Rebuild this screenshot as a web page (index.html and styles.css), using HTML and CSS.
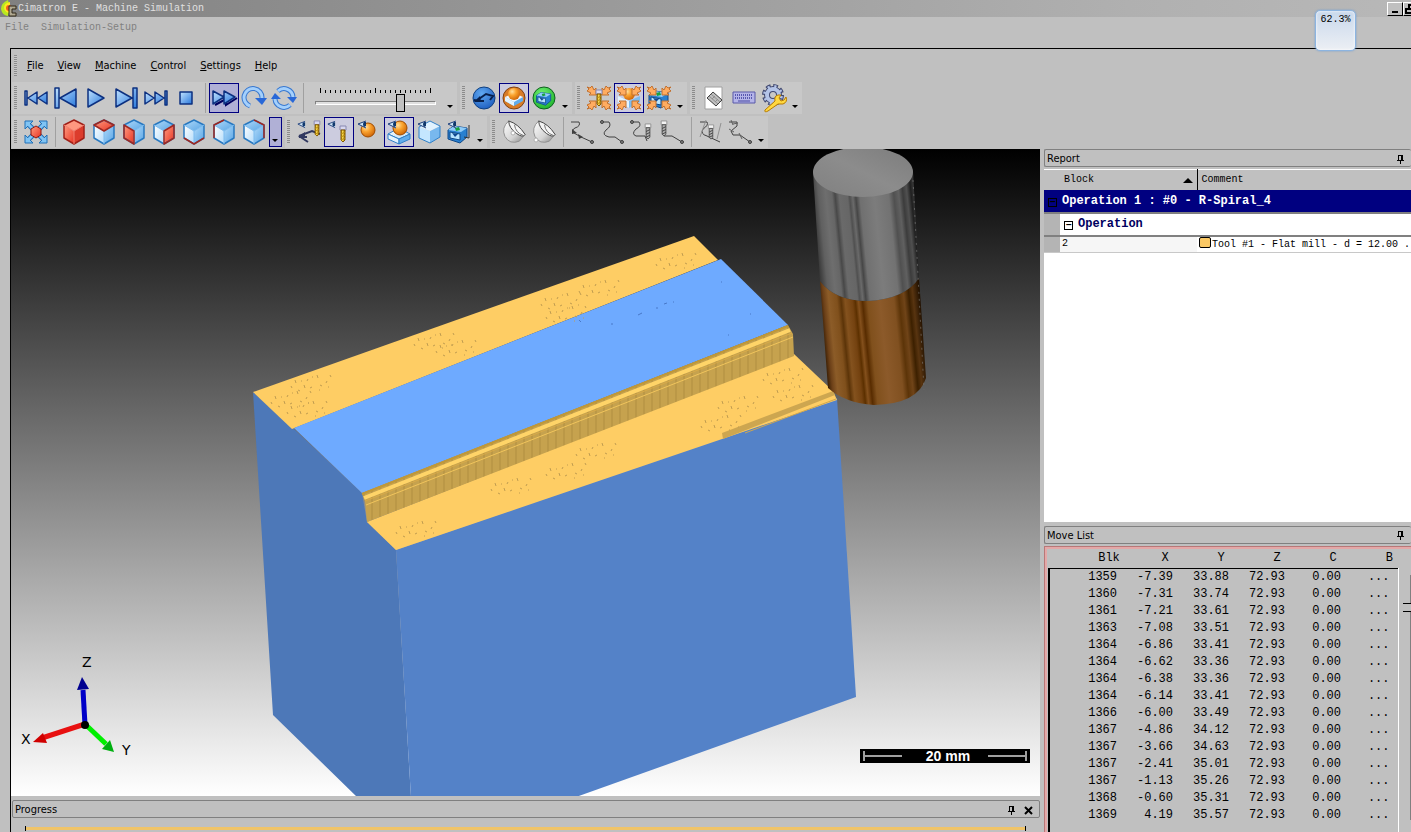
FILE: index.html
```html
<!DOCTYPE html>
<html lang="en">

<head>
    <meta charset="UTF-8">
    <meta name="viewport" content="width=device-width, initial-scale=1.0">
    <title>Cimatron E - Machine Simulation</title>
    <link rel="stylesheet" href="styles.css">
</head>

<body>
    <!-- Shared gradients and icon parts -->
    <svg class="defs" aria-hidden="true">
        <defs>
            <linearGradient id="blue" x1="0" y1="0" x2="1" y2="1">
                <stop offset="0" stop-color="#c4e4ff" />
                <stop offset="1" stop-color="#2878dc" />
            </linearGradient>
            <linearGradient id="ice" x1="0" y1="0" x2="1" y2="1">
                <stop offset="0" stop-color="#ffffff" />
                <stop offset="1" stop-color="#b4dcfa" />
            </linearGradient>
            <linearGradient id="sky" x1="0" y1="0" x2="1" y2="1">
                <stop offset="0" stop-color="#b0dafa" />
                <stop offset="1" stop-color="#58a4e4" />
            </linearGradient>
            <linearGradient id="red" x1="0" y1="0" x2="1" y2="1">
                <stop offset="0" stop-color="#ff9c80" />
                <stop offset="1" stop-color="#e83424" />
            </linearGradient>
            <radialGradient id="ball" cx=".35" cy=".3" r=".8">
                <stop offset="0" stop-color="#ffe0a0" />
                <stop offset=".4" stop-color="#fba430" />
                <stop offset="1" stop-color="#c85c00" />
            </radialGradient>
            <radialGradient id="disc" cx=".4" cy=".3" r=".8">
                <stop offset="0" stop-color="#60a8f0" />
                <stop offset="1" stop-color="#1858bc" />
            </radialGradient>
            <radialGradient id="green" cx=".4" cy=".3" r=".8">
                <stop offset="0" stop-color="#70f070" />
                <stop offset="1" stop-color="#18b028" />
            </radialGradient>
            <linearGradient id="gold" x1="0" y1="0" x2="1" y2="0">
                <stop offset="0" stop-color="#a07000" />
                <stop offset=".4" stop-color="#ffe050" />
                <stop offset="1" stop-color="#906000" />
            </linearGradient>
            <linearGradient id="silver" x1="0" y1="0" x2="1" y2="1">
                <stop offset="0" stop-color="#ffffff" />
                <stop offset=".6" stop-color="#d4d4d4" />
                <stop offset="1" stop-color="#808080" />
            </linearGradient>

            <symbol id="cube" viewBox="0 0 30 30">
                <path d="M15 3 25 8 15 14 5 8Z" fill="var(--top, url(#sky))" />
                <path d="M5 8 15 14V27L5 21Z" fill="var(--left, url(#ice))" />
                <path d="M25 8 15 14V27L25 21Z" fill="var(--right, url(#sky))" />
                <path d="M15 3 25 8V21L15 27 5 21V8Z" fill="none" stroke="var(--edge, #2878c0)" stroke-width="1.5" stroke-linejoin="round" />
                <path d="M5 8 15 14 25 8M15 14V27" fill="none" stroke="var(--inner, #7cbcf0)" />
            </symbol>
            <symbol id="eye" viewBox="0 0 10 9">
                <path d="M9 1 1 4 9 8" fill="#d0e8f8" stroke="#20407c" />
                <path d="M7 2Q5 4 7 7L9 6V2Z" fill="#10386c" />
            </symbol>
            <symbol id="mill" viewBox="0 0 8 18">
                <path d="M1 1H7V5H1Z" fill="#d8d8f0" stroke="#8888b0" />
                <path d="M2 5H6V15L4 17 2 15Z" fill="url(#gold)" stroke="#805800" />
                <path d="M2 9 6 7M2 12 6 10M2 15 6 13" stroke="#b88c10" />
            </symbol>
            <symbol id="graymill" viewBox="0 0 8 18">
                <path d="M1 1H7V5H1Z" fill="#f4f4f4" stroke="#909090" />
                <path d="M2 5H6V15L4 17 2 15Z" fill="#b0b0b0" stroke="#505050" />
                <path d="M2 9 6 7M2 12 6 10M2 15 6 13" stroke="#404040" />
            </symbol>
            <symbol id="block" viewBox="0 0 24 18">
                <path d="M1 7 12 1 23 7 12 12Z" fill="url(#ice)" stroke="#3080c8" />
                <path d="M1 7 12 12V17L1 12Z" fill="#e4f4ff" stroke="#3080c8" />
                <path d="M23 7 12 12V17L23 12Z" fill="#60acec" stroke="#3080c8" />
            </symbol>
            <symbol id="machine" viewBox="0 0 24 20">
                <path d="M2 6 8 2 21 4V13L14 19 2 15Z" fill="#2880d0" stroke="#104888" />
                <path d="M2 6 8 2 21 4 15 8Z" fill="#90ccf8" />
                <path d="M4 8 14 10V16L4 14Z" fill="#b8e4ff" stroke="#104888" />
                <path d="M6 9 12 10 9 13Z" fill="#104890" />
                <path d="M9 4 13 3 14 6 10 7Z" fill="#18a040" />
            </symbol>
            <symbol id="corners" viewBox="0 0 30 30">
                <g fill="#ffac60" stroke="#c07030">
                    <path d="M3 4 6 5 8 3 10 7 12 5V12H5L7 10 3 8 5 6Z" />
                    <path d="M27 4 24 5 22 3 20 7 18 5V12H25L23 10 27 8 25 6Z" />
                    <path d="M3 26 6 25 8 27 10 23 12 25V18H5L7 20 3 22 5 24Z" />
                    <path d="M27 26 24 25 22 27 20 23 18 25V18H25L23 20 27 22 25 24Z" />
                </g>
            </symbol>
            <symbol id="dish" viewBox="0 0 26 26">
                <path d="M7 1Q-1 8 3 17 8 26 18 22L24 15Z" fill="url(#silver)" stroke="#909090" />
                <path d="M7 1Q17 4 24 15 22 19 15 14 7 8 7 1Z" fill="#f4f4f4" stroke="#404040" />
                <path d="M13 5Q14 13 22 16" fill="none" stroke="#707070" />
            </symbol>
            <symbol id="drop" viewBox="0 0 13 30">
                <path d="M3 22H9L6 25Z" fill="#000" />
            </symbol>
            <symbol id="pin" viewBox="0 0 9 9">
                <path d="M2 0H7V5H8V6H5V9H4V6H1V5H2ZM3 1V5H5V1Z" fill="#000" fill-rule="evenodd" shape-rendering="crispEdges" />
            </symbol>
        </defs>
    </svg>

    <header class="titlebar">
        <svg class="app-icon" viewBox="0 0 17 17">
            <path d="M8 0Q1 3 1 9 2 15 8 16L10 9Z" fill="#b8e820" />
            <path d="M10 2Q4 3 4 8 5 13 10 13Z" fill="#ffe820" />
            <circle cx="9" cy="8" r="3" fill="#f06020" />
            <path d="M9 6H16V9H12V13H16V16H9Z" fill="#b0a890" stroke="#302818" />
        </svg>
        <h1>Cimatron E - Machine Simulation</h1>
        <div class="window-buttons">
            <button aria-label="Minimize"><svg viewBox="0 0 14 12"><path d="M4 9H10" stroke="#000" stroke-width="2" /></svg></button>
            <button aria-label="Restore"><svg viewBox="0 0 14 12"><path d="M5 5V2H11V7H9M2 6H8V10H2Z" fill="none" stroke="#000" stroke-width="2" /></svg></button>
        </div>
    </header>
    <nav class="outer-menu">
        <a href="#">File</a>
        <a href="#">Simulation-Setup</a>
    </nav>
    <div class="usage">62.3%</div>

    <div class="window">
        <nav class="menu">
            <span class="grip"></span>
            <a href="#"><u>F</u>ile</a>
            <a href="#"><u>V</u>iew</a>
            <a href="#"><u>M</u>achine</a>
            <a href="#"><u>C</u>ontrol</a>
            <a href="#"><u>S</u>ettings</a>
            <a href="#"><u>H</u>elp</a>
        </nav>

        <div class="toolbar">
            <div class="group">
                <span class="grip"></span>
                <button class="tool" aria-label="To start"><svg viewBox="0 0 30 30"><path d="M4 8H6V22H4ZM16 9V21L7 15ZM26 9V21L17 15Z" class="media" /></svg></button>
                <button class="tool" aria-label="Step back"><svg viewBox="0 0 30 30"><path d="M4 5H8V25H4ZM25 6V24L9 15Z" class="media" /></svg></button>
                <button class="tool" aria-label="Play"><svg viewBox="0 0 30 30"><path d="M7 6V24L23 15Z" class="media" /></svg></button>
                <button class="tool" aria-label="Step forward"><svg viewBox="0 0 30 30"><path d="M22 5H26V25H22ZM5 6V24L21 15Z" class="media" /></svg></button>
                <button class="tool" aria-label="To end"><svg viewBox="0 0 30 30"><path d="M24 8H26V22H24ZM4 9V21L13 15ZM14 9V21L23 15Z" class="media" /></svg></button>
                <button class="tool" aria-label="Stop"><svg viewBox="0 0 30 30"><path d="M9 9H21V21H9Z" class="media" /></svg></button>
                <span class="sep"></span>
                <button class="tool pressed" aria-label="Fast mode"><svg viewBox="0 0 30 30"><path d="M6 22 17 16V22L28 15" fill="none" stroke="#000060" stroke-width="2" /><path d="M4 8V21L15 14ZM15 8V21L26 14Z" class="media" /></svg></button>
                <button class="tool" aria-label="Loop once"><svg viewBox="0 0 30 30"><path d="M11 23A9 9 0 1 1 23 15" fill="none" stroke="#3878d0" stroke-width="5" /><path d="M11 23A9 9 0 1 1 23 15" fill="none" stroke="#a4d0fc" stroke-width="3" /><path d="M16 15H28L23 22Z" fill="#2868d8" /></svg></button>
                <button class="tool" aria-label="Loop"><svg viewBox="0 0 30 30"><path d="M9 8A9 9 0 0 1 24 14M21 22A9 9 0 0 1 6 16" fill="none" stroke="#3878d0" stroke-width="5" /><path d="M9 8A9 9 0 0 1 24 14M21 22A9 9 0 0 1 6 16" fill="none" stroke="#a4d0fc" stroke-width="3" /><path d="M18 14H28L24 20ZM2 16H12L6 10Z" fill="#2868d8" /></svg></button>
                <span class="sep"></span>
                <div class="speed">
                    <svg viewBox="0 0 121 7"><path d="M5 1V6M60 1V6M115 1V6M10 3V6M15 3V6M20 3V6M25 3V6M30 3V6M35 3V6M40 3V6M45 3V6M50 3V6M55 3V6M65 3V6M70 3V6M75 3V6M80 3V6M85 3V6M90 3V6M95 3V6M100 3V6M105 3V6M110 3V6" stroke="#000" shape-rendering="crispEdges" /></svg>
                    <input type="range" min="0" max="100" value="73" aria-label="Speed">
                </div>
                <button class="more" aria-label="More"><svg><use href="#drop" /></svg></button>
            </div>
            <div class="group">
                <span class="grip"></span>
                <button class="tool" aria-label="Toolpath mode"><svg viewBox="0 0 30 30"><circle cx="15" cy="15" r="11" fill="url(#disc)" stroke="#104080" /><path d="M5 17 10 18 15 18M7 18 17 11 24 13 21 17" fill="none" stroke="#08204c" stroke-width="2" /><path d="M5 19 11 13 12 19Z" fill="#08204c" /></svg></button>
                <button class="tool checked" aria-label="Material mode"><svg viewBox="0 0 30 30"><circle cx="15" cy="15" r="11" fill="#d87c28" stroke="#804010" /><path d="M6 14 15 18 24 14V18L15 23 6 18Z" fill="#60acec" /><path d="M6 14 15 10 24 14 15 19Z" fill="#f0f8ff" /><path d="M6 14 15 19V23L6 18Z" fill="#e4f4ff" /><circle cx="15" cy="11" r="6" fill="url(#ball)" /></svg></button>
                <button class="tool" aria-label="Machine mode"><svg viewBox="0 0 30 30"><circle cx="15" cy="15" r="11" fill="url(#green)" stroke="#106020" /><use href="#machine" x="6" y="8" width="18" height="15" /></svg></button>
                <button class="more" aria-label="More"><svg><use href="#drop" /></svg></button>
            </div>
            <div class="group">
                <span class="grip"></span>
                <button class="tool" aria-label="Focus tool"><svg viewBox="0 0 30 30"><use href="#corners" /><use href="#mill" x="11" y="6" width="8" height="18" /></svg></button>
                <button class="tool checked" aria-label="Focus workpiece"><svg viewBox="0 0 30 30"><path d="M4 13 15 18 26 13V19L15 25 4 19Z" fill="#7cbcf0" /><path d="M4 13 15 18V25L4 19Z" fill="#e4f4ff" /><circle cx="15" cy="11" r="6" fill="url(#ball)" /><use href="#corners" /></svg></button>
                <button class="tool" aria-label="Focus machine"><svg viewBox="0 0 30 30"><use href="#machine" x="3" y="6" width="24" height="20" /><use href="#corners" /></svg></button>
                <button class="more" aria-label="More"><svg><use href="#drop" /></svg></button>
            </div>
            <div class="group">
                <span class="grip"></span>
                <button class="tool" aria-label="Report"><svg viewBox="0 0 30 30"><path d="M6 4H23V26H6Z" fill="#fff" stroke="#a0a0a0" /><path d="M8 15 14 9 23 17 17 23Z" fill="#c0c0c0" stroke="#404040" /><path d="M10 13 19 21M12 11 21 19M13 16 16 13M16 19 19 16" stroke="#909090" fill="none" /></svg></button>
                <button class="tool" aria-label="Keyboard"><svg viewBox="0 0 30 30"><path d="M4 9H26V20H4Z" fill="#b4b4e8" stroke="#5858a8" /><path d="M6 12H24M6 15H24" stroke="#5858b0" stroke-width="2" stroke-dasharray="1 1" /><path d="M9 18H21" stroke="#4848a0" /></svg></button>
                <button class="tool" aria-label="Options"><svg viewBox="0 0 30 30"><g fill="none"><circle cx="14" cy="12" r="8" stroke="#404870" stroke-width="6" stroke-dasharray="4 2.28" /><circle cx="14" cy="12" r="6" stroke="#404870" stroke-width="6" /><circle cx="14" cy="12" r="8" stroke="#b4c4e8" stroke-width="4" stroke-dasharray="2 4.28" stroke-dashoffset="-1" /><circle cx="14" cy="12" r="6" stroke="#b4c4e8" stroke-width="4" /></g><path d="M6 27 16 18Q15 13 19 12L22 12 20 15 22 18 25 17 27 14Q29 19 24 21L19 21 9 28Q5 30 6 27Z" fill="#ffd840" stroke="#b87c00" /></svg></button>
                <button class="more" aria-label="More"><svg><use href="#drop" /></svg></button>
            </div>
        </div>

        <div class="toolbar">
            <div class="group">
                <span class="grip"></span>
                <button class="tool" aria-label="Fit"><svg viewBox="0 0 30 30"><path d="M7 7 23 23M23 7 7 23" stroke="#2070b8" stroke-width="5" /><path d="M4 4H12L4 12ZM26 4H18L26 12ZM4 26H12L4 18ZM26 26H18L26 18Z" fill="#80c4f4" stroke="#2070b8" /><path d="M7 7 23 23M23 7 7 23" stroke="#80c4f4" stroke-width="3" /><path d="M15 9 20 12V18L15 21 10 18V12Z" fill="url(#red)" stroke="#901810" /></svg></button>
                <span class="sep"></span>
                <button class="tool" aria-label="Isometric"><svg class="iso"><use href="#cube" /></svg></button>
                <button class="tool" aria-label="Top"><svg class="top" viewBox="0 0 30 30"><use href="#cube" /><path d="M15 3 25 8 15 14 5 8Z" class="face-edge" /></svg></button>
                <button class="tool" aria-label="Front"><svg class="front" viewBox="0 0 30 30"><use href="#cube" /><path d="M5 8 15 14V27L5 21Z" class="face-edge" /></svg></button>
                <button class="tool" aria-label="Right"><svg class="right" viewBox="0 0 30 30"><use href="#cube" /><path d="M25 8 15 14V27L25 21Z" class="face-edge" /></svg></button>
                <button class="tool" aria-label="Bottom"><svg viewBox="0 0 30 30"><use href="#cube" /><path d="M5 21 15 27 25 21" class="face-edge" /></svg></button>
                <button class="tool" aria-label="Left"><svg viewBox="0 0 30 30"><use href="#cube" /><path d="M5 21V8L15 3" class="face-edge" /></svg></button>
                <button class="tool" aria-label="Back"><svg viewBox="0 0 30 30"><use href="#cube" /><path d="M15 3 25 8V21" class="face-edge" /></svg></button>
                <button class="more pressed" aria-label="More"><svg><use href="#drop" /></svg></button>
            </div>
            <div class="group">
                <span class="grip"></span>
                <button class="tool" aria-label="Show toolpath"><svg viewBox="0 0 30 30"><use href="#eye" x="3" y="3" width="9" height="9" /><path d="M5 19 18 14 26 17M5 19 14 25M5 20H13" fill="none" stroke="#303860" stroke-width="2" /><path d="M4 20 11 15 11 21Z" fill="#303860" /><use href="#mill" x="19" y="3" width="8" height="17" /></svg></button>
                <button class="tool checked" aria-label="Show tool"><svg viewBox="0 0 30 30"><use href="#eye" x="3" y="3" width="9" height="9" /><use href="#mill" x="15" y="8" width="8" height="18" /></svg></button>
                <button class="tool" aria-label="Show holder"><svg viewBox="0 0 30 30"><circle cx="14" cy="13" r="7" fill="url(#ball)" stroke="#a04c00" /><use href="#eye" x="3" y="3" width="10" height="9" /></svg></button>
                <button class="tool checked" aria-label="Show workpiece"><svg viewBox="0 0 30 30"><use href="#block" x="3" y="10" width="24" height="18" /><circle cx="16" cy="11" r="7" fill="url(#ball)" stroke="#a04c00" /><use href="#eye" x="3" y="3" width="10" height="9" /></svg></button>
                <button class="tool" aria-label="Show stock"><svg viewBox="0 0 30 30"><path d="M5 10 16 14V26L5 21Z" fill="#c4e6ff" /><path d="M26 9 16 14V26L26 20Z" fill="#78b8ee" /><path d="M5 10 16 4 26 9 16 14Z" fill="#e0f2ff" /><path d="M5 10 16 4 26 9V20L16 26 5 21Z" fill="none" stroke="#3080c8" /><use href="#eye" x="3" y="3" width="10" height="9" /></svg></button>
                <button class="tool" aria-label="Show machine"><svg viewBox="0 0 30 30"><use href="#machine" x="2" y="7" width="24" height="20" /><path d="M25 8V21L20 20" fill="none" stroke="#303030" /><use href="#eye" x="3" y="3" width="10" height="9" /></svg></button>
                <button class="more" aria-label="More"><svg><use href="#drop" /></svg></button>
            </div>
            <div class="group">
                <span class="grip"></span>
                <button class="tool" aria-label="Probe inside"><svg viewBox="0 0 30 30"><use href="#dish" x="3" y="3" width="25" height="25" /><circle cx="14" cy="16" r="2" fill="#fff" stroke="#b0b0b0" /></svg></button>
                <button class="tool" aria-label="Probe outside"><svg viewBox="0 0 30 30"><use href="#dish" x="3" y="3" width="25" height="25" /><circle cx="7" cy="23" r="2" fill="#fff" stroke="#b0b0b0" /></svg></button>
                <span class="sep"></span>
                <button class="tool" aria-label="Whole path"><svg viewBox="0 0 30 30"><path d="M4 5H12Q14 9 8 11 4 13 7 16L14 20 25 25" class="path" /><path d="M5 12 10 16 5 17ZM11 17 16 20 12 22Z" fill="#404040" /><circle cx="25" cy="25" r="1.5" class="dot" /></svg></button>
                <button class="tool" aria-label="Path segment"><svg viewBox="0 0 30 30"><path d="M5 5H12Q15 9 9 13 4 18 12 20H18L25 25" class="path" /><circle cx="5" cy="5" r="1.5" class="dot" /><circle cx="25" cy="25" r="1.5" class="dot" /></svg></button>
                <button class="tool" aria-label="Path to tool"><svg viewBox="0 0 30 30"><path d="M5 5H12Q15 9 9 12 4 17 9 19H18L20 24" class="path" /><circle cx="5" cy="5" r="1.5" class="dot" /><use href="#graymill" x="17" y="6" width="8" height="17" /></svg></button>
                <button class="tool" aria-label="Path from tool"><svg viewBox="0 0 30 30"><path d="M7 19H15L25 25" class="path" /><circle cx="25" cy="25" r="1.5" class="dot" /><use href="#graymill" x="3" y="3" width="8" height="17" /></svg></button>
                <span class="sep"></span>
                <button class="tool" aria-label="Tool trace"><svg viewBox="0 0 30 30"><path d="M5 5H12Q14 8 8 12 5 17 12 19L25 25" class="path" /><path d="M11 3 5 20M26 6 22 22" fill="none" stroke="#909090" /><use href="#graymill" x="12" y="7" width="8" height="16" /></svg></button>
                <button class="tool" aria-label="Path trace"><svg viewBox="0 0 30 30"><path d="M4 5H12L12 9 6 14 8 18H15L25 25" class="path" /><path d="M6 3 8 8M13 6 8 7M4 12 9 15M14 16 17 22" fill="none" stroke="#606060" /><circle cx="25" cy="25" r="1.5" class="dot" /></svg></button>
                <button class="more" aria-label="More"><svg><use href="#drop" /></svg></button>
            </div>
        </div>

        <main class="work">
            <div class="left">
                <svg class="viewport" viewBox="11 149 1029 647" preserveAspectRatio="xMinYMin slice">
                    <defs>
                        <linearGradient id="steel" gradientUnits="userSpaceOnUse" x1="816" y1="232" x2="918" y2="222">
                            <stop offset="0" stop-color="#3c3c3c" />
                            <stop offset=".06" stop-color="#606060" />
                            <stop offset=".13" stop-color="#6e6e6e" />
                            <stop offset=".19" stop-color="#666" />
                            <stop offset=".22" stop-color="#484848" />
                            <stop offset=".26" stop-color="#6a6a6a" />
                            <stop offset=".34" stop-color="#666" />
                            <stop offset=".36" stop-color="#505050" />
                            <stop offset=".39" stop-color="#6a6a6a" />
                            <stop offset=".42" stop-color="#464646" />
                            <stop offset=".46" stop-color="#707070" />
                            <stop offset=".6" stop-color="#7c7c7c" />
                            <stop offset=".74" stop-color="#727272" />
                            <stop offset=".79" stop-color="#505050" />
                            <stop offset=".84" stop-color="#606060" />
                            <stop offset=".88" stop-color="#3c3c3c" />
                            <stop offset=".92" stop-color="#505050" />
                            <stop offset=".96" stop-color="#202020" />
                            <stop offset="1" stop-color="#404040" />
                        </linearGradient>
                        <linearGradient id="copper" gradientUnits="userSpaceOnUse" x1="823" y1="345" x2="924" y2="335">
                            <stop offset="0" stop-color="#301800" />
                            <stop offset=".05" stop-color="#6c4018" />
                            <stop offset=".1" stop-color="#8c5c28" />
                            <stop offset=".18" stop-color="#80501c" />
                            <stop offset=".22" stop-color="#5c3408" />
                            <stop offset=".26" stop-color="#84521e" />
                            <stop offset=".33" stop-color="#744210" />
                            <stop offset=".36" stop-color="#5c3000" />
                            <stop offset=".39" stop-color="#84501c" />
                            <stop offset=".43" stop-color="#582c00" />
                            <stop offset=".48" stop-color="#80501c" />
                            <stop offset=".6" stop-color="#8c5a2a" />
                            <stop offset=".74" stop-color="#805020" />
                            <stop offset=".79" stop-color="#5c3408" />
                            <stop offset=".84" stop-color="#704418" />
                            <stop offset=".89" stop-color="#3c2000" />
                            <stop offset=".93" stop-color="#583410" />
                            <stop offset="1" stop-color="#201000" />
                        </linearGradient>
                        <linearGradient id="cap" x1="0" y1="1" x2="1" y2="0">
                            <stop offset="0" stop-color="#808080" />
                            <stop offset=".5" stop-color="#8c8c8c" />
                            <stop offset="1" stop-color="#7c7c7c" />
                        </linearGradient>
                        <pattern id="ribs" width="8" height="60" patternUnits="userSpaceOnUse">
                            <rect width="8" height="60" fill="#c6a24e" />
                            <path d="M4 0V60" stroke="#b08e40" />
                        </pattern>
                        <g id="specks" fill="none" stroke="#c09c50">
                            <path d="M1 14l1 2M5 8l1 3M8 18l2 1M14 13l1 3M18 7l-1 2M20 16l2-1M27 3l1 3M30 13l2 1M36 11l1-2M40 3l1 2M11 9h1M22 5h1M29 18h1M38 15h1" />
                        </g>
                    </defs>

                    <!-- Workpiece -->
                    <path d="M253 392 294 429 362 493 367 522 396 550 411 797H357L273 715Z" fill="#4d78b8" />
                    <path d="M396 550 837 398 856 697 576 797H411Z" fill="#5482c8" />
                    <path d="M253 392 694 236 718 260 292 429Z" fill="#fecd64" />
                    <path d="M294 428 721 259 788 325 362 493Z" fill="#6eaaff" />
                    <path d="M367 522 794 354 833 391 837 400 396 550Z" fill="#fecd64" />
                    <path d="M362 493 788 325 793 334 794 356 367 522 365 502Z" fill="url(#ribs)" />
                    <path d="M362 494 788 326" stroke="#c09838" stroke-width="2" />
                    <path d="M364 498 790 330" stroke="#ffd468" stroke-width="4" />
                    <path d="M365 501 792 333" stroke="#d8aa48" />
                    <path d="M366 505 793 337" stroke="#f0c45c" />
                    <path d="M722 433 833 391 835 395 723 439Z" fill="#cda650" />
                    <path d="M745 433 836 399" stroke="#cda650" />

                    <!-- Surface marks -->
                    <use href="#specks" x="270" y="388" />
                    <use href="#specks" x="290" y="372" />
                    <use href="#specks" x="286" y="398" />
                    <use href="#specks" x="413" y="330" />
                    <use href="#specks" x="435" y="337" />
                    <use href="#specks" x="540" y="290" />
                    <use href="#specks" x="545" y="303" />
                    <use href="#specks" x="578" y="277" />
                    <use href="#specks" x="655" y="250" />
                    <use href="#specks" x="395" y="518" />
                    <use href="#specks" x="490" y="475" />
                    <use href="#specks" x="545" y="460" />
                    <use href="#specks" x="575" y="440" />
                    <use href="#specks" x="700" y="412" />
                    <use href="#specks" x="717" y="393" />
                    <use href="#specks" x="762" y="365" />
                    <use href="#specks" x="772" y="382" />
                    <path d="M579 320l2 2M611 324h2M638 315l4-2M656 308h2M664 304l3-1M673 302h1M721 282h1M750 314h1M728 335h1" stroke="#4878c8" />

                    <!-- Cutter -->
                    <path d="M820 281Q835 301 868 301 905 299 919 278L926 378Q918 404 874 405 845 403 828 388Z" fill="url(#copper)" />
                    <path d="M813 172H913L919 278Q905 299 868 301 835 301 820 281Z" fill="url(#steel)" />
                    <path d="M913 180 924 390" stroke="#909090" stroke-dasharray="2 5" opacity=".5" />
                    <ellipse cx="863" cy="172" rx="50" ry="25" fill="url(#cap)" />

                    <!-- Axes -->
                    <g class="axis-label">
                        <text x="82" y="667">Z</text>
                        <text x="21" y="744">X</text>
                        <text x="122" y="755">Y</text>
                    </g>
                    <path d="M85 724 42 738" stroke="#e81010" stroke-width="5" />
                    <path d="M33 742 43 733 47 743Z" fill="#d00000" />
                    <path d="M85 725 83 690" stroke="#0000c8" stroke-width="5" />
                    <path d="M82 677 89 689 77 690Z" fill="#000090" />
                    <path d="M86 725 106 744" stroke="#00f000" stroke-width="5" />
                    <path d="M114 752 102 749 110 740Z" fill="#00b010" />
                    <circle cx="85" cy="725" r="4" />

                    <!-- Scale -->
                    <path d="M860 749H1030V763H860Z" />
                    <path d="M864 751V761M864 756H902M988 756H1026M1026 751V761" stroke="#a0a0a0" stroke-width="2" />
                    <text class="scale-label" x="948" y="761">20 mm</text>
                </svg>
                <section class="progress-panel">
                    <h2 class="panel-head">Progress
                        <button aria-label="Pin"><svg><use href="#pin" /></svg></button>
                        <button aria-label="Close"><svg viewBox="0 0 9 9"><path d="M1 1 8 8M8 1 1 8" stroke="#000" stroke-width="2" /></svg></button>
                    </h2>
                    <progress value="100" max="100" aria-label="Progress"></progress>
                </section>
            </div>

            <div class="side">
                <section class="report">
                    <h2 class="panel-head">Report
                        <button aria-label="Pin"><svg><use href="#pin" /></svg></button>
                    </h2>
                    <table>
                        <colgroup>
                            <col class="indent">
                            <col class="block">
                            <col>
                        </colgroup>
                        <thead>
                            <tr>
                                <th colspan="2">Block <svg viewBox="0 0 10 5"><path d="M5 0 10 5H0Z" /></svg></th>
                                <th>Comment</th>
                            </tr>
                        </thead>
                        <tbody>
                            <tr class="group-row">
                                <td><span class="fold">&minus;</span></td>
                                <td colspan="2">Operation 1 : #0 - R-Spiral_4</td>
                            </tr>
                            <tr class="subgroup-row">
                                <td></td>
                                <td colspan="2"><span class="fold">&minus;</span>Operation</td>
                            </tr>
                            <tr class="item-row">
                                <td></td>
                                <td>2</td>
                                <td><span class="swatch"></span>Tool #1 - Flat mill - d = 12.00 .</td>
                            </tr>
                        </tbody>
                    </table>
                </section>

                <section class="moves">
                    <h2 class="panel-head">Move List
                        <button aria-label="Pin"><svg><use href="#pin" /></svg></button>
                    </h2>
                    <div class="moves-body">
                        <table>
                            <thead>
                                <tr><th>Blk</th><th>X</th><th>Y</th><th>Z</th><th>C</th><th>B</th></tr>
                            </thead>
                            <tbody>
                                <tr><td>1359</td><td>-7.39</td><td>33.88</td><td>72.93</td><td>0.00</td><td>...</td></tr>
                                <tr><td>1360</td><td>-7.31</td><td>33.74</td><td>72.93</td><td>0.00</td><td>...</td></tr>
                                <tr><td>1361</td><td>-7.21</td><td>33.61</td><td>72.93</td><td>0.00</td><td>...</td></tr>
                                <tr><td>1363</td><td>-7.08</td><td>33.51</td><td>72.93</td><td>0.00</td><td>...</td></tr>
                                <tr><td>1364</td><td>-6.86</td><td>33.41</td><td>72.93</td><td>0.00</td><td>...</td></tr>
                                <tr><td>1364</td><td>-6.62</td><td>33.36</td><td>72.93</td><td>0.00</td><td>...</td></tr>
                                <tr><td>1364</td><td>-6.38</td><td>33.36</td><td>72.93</td><td>0.00</td><td>...</td></tr>
                                <tr><td>1364</td><td>-6.14</td><td>33.41</td><td>72.93</td><td>0.00</td><td>...</td></tr>
                                <tr><td>1366</td><td>-6.00</td><td>33.49</td><td>72.93</td><td>0.00</td><td>...</td></tr>
                                <tr><td>1367</td><td>-4.86</td><td>34.12</td><td>72.93</td><td>0.00</td><td>...</td></tr>
                                <tr><td>1367</td><td>-3.66</td><td>34.63</td><td>72.93</td><td>0.00</td><td>...</td></tr>
                                <tr><td>1367</td><td>-2.41</td><td>35.01</td><td>72.93</td><td>0.00</td><td>...</td></tr>
                                <tr><td>1367</td><td>-1.13</td><td>35.26</td><td>72.93</td><td>0.00</td><td>...</td></tr>
                                <tr><td>1368</td><td>-0.60</td><td>35.31</td><td>72.93</td><td>0.00</td><td>...</td></tr>
                                <tr><td>1369</td><td>4.19</td><td>35.57</td><td>72.93</td><td>0.00</td><td>...</td></tr>
                                <tr class="pad"><td colspan="6"></td></tr>
                            </tbody>
                        </table>
                        <div class="move-slider">
                            <input type="range" min="0" max="100" value="12" aria-label="Move position">
                        </div>
                    </div>
                </section>
            </div>
        </main>
    </div>
</body>

</html>
```
FILE: styles.css
```css
* {
    box-sizing: border-box;
}

body {
    margin: 0;
    height: 100vh;
    display: flex;
    flex-direction: column;
    overflow: hidden;
    position: relative;
    background: #c0c0c0;
    color: #000;
    font-family: "DejaVu Sans Condensed", "Liberation Sans", sans-serif;
    font-size: 11px;
    line-height: 16px;
}

button {
    padding: 0;
    border: 0;
    background: none;
    font: inherit;
}

a {
    color: inherit;
    text-decoration: none;
}

svg {
    display: block;
}

.defs {
    position: absolute;
    width: 0;
    height: 0;
}

/* Outer window */
.titlebar {
    display: flex;
    align-items: center;
    height: 17px;
    flex: none;
    overflow: hidden;
    background: linear-gradient(to right, #808080, #b0b0b0 80%, #b8b8b8);
}

.app-icon {
    width: 17px;
    height: 17px;
    margin-right: 1px;
}

.titlebar h1 {
    margin: 0;
    flex: 1;
    color: #e0e0e0;
    font: 10px/16px "Liberation Mono", monospace;
}

.window-buttons {
    display: flex;
    width: 24px;
    overflow: hidden;
}

.window-buttons button {
    flex: none;
    width: 16px;
    height: 14px;
    background: #c0c0c0;
    border: 1px solid;
    border-color: #fff #000 #000 #fff;
}

.outer-menu {
    display: flex;
    gap: 12px;
    flex: none;
    height: 31px;
    padding: 3px 5px;
    color: #808080;
    font: 10px/16px "Liberation Mono", monospace;
}

.usage {
    position: absolute;
    top: 10px;
    right: 55px;
    width: 41px;
    height: 41px;
    border: 1px solid #8cb4e0;
    border-radius: 5px;
    background: linear-gradient(#c8d8ec, #eceff4);
    box-shadow: inset 0 0 3px #fff, 0 0 2px #6c9cd4;
    font: 10px/18px "Liberation Mono", monospace;
    text-align: center;
}

.window {
    flex: 1;
    min-height: 0;
    display: flex;
    flex-direction: column;
    margin-left: 10px;
    border-top: 1px solid #000;
    border-left: 1px solid #000;
}

/* Menu and toolbars */
.grip {
    width: 3px;
    height: 24px;
    margin: 0 4px 0 2px;
    background: repeating-linear-gradient(#8c8c8c 0 1px, #c8c8c8 1px 2px);
}

.menu {
    display: flex;
    align-items: center;
    gap: 14px;
    flex: none;
    height: 33px;
    padding-left: 3px;
}

.menu .grip {
    height: 21px;
    margin: 0 -4px 0 0;
}

.toolbar {
    display: flex;
    gap: 3px;
    flex: none;
    padding-left: 1px;
    margin-bottom: 2px;
}

.toolbar + .toolbar {
    margin-bottom: 1px;
}

.group {
    display: flex;
    align-items: center;
    height: 32px;
    background: #c8c8c8;
}

.tool,
.more {
    width: 30px;
    height: 30px;
    border: 1px solid transparent;
}

.more {
    width: 13px;
}

.tool svg {
    width: 30px;
    height: 30px;
    margin: -1px;
}

.more svg {
    width: 13px;
    height: 30px;
    margin: -1px;
}

.checked {
    background: #ccccdf;
    border-color: #000080;
}

.pressed {
    background: #b0b0d6;
    border-color: #000080;
}

.sep {
    width: 8px;
    height: 30px;
    background: linear-gradient(#a0a0a0, #a0a0a0) center / 1px 30px no-repeat;
}

.media {
    fill: url(#blue);
    stroke: #0c3080;
    stroke-width: 1.5;
    stroke-linejoin: round;
}

.path {
    fill: none;
    stroke: #404040;
}

.dot {
    fill: #808080;
    stroke: #404040;
}

.iso {
    --top: #ff9880;
    --left: url(#red);
    --right: #dc3c2c;
    --edge: #a02018;
    --inner: #f08070;
}

.top {
    --top: url(#red);
}

.front {
    --left: url(#red);
}

.right {
    --right: url(#red);
}

.face-edge {
    fill: none;
    stroke: #a02820;
    stroke-width: 1.5;
    stroke-linejoin: round;
}

.speed {
    width: 137px;
    height: 30px;
    padding: 4px 8px;
}

.speed svg {
    width: 121px;
    height: 7px;
}

.speed input {
    display: block;
    appearance: none;
    width: 121px;
    height: 18px;
    margin: 0;
    background: none;
}

.speed input::-webkit-slider-runnable-track {
    height: 4px;
    border: 1px solid;
    border-color: #808080 #fff #fff #808080;
    background: #e0e0e0;
}

.speed input::-webkit-slider-thumb {
    appearance: none;
    width: 9px;
    height: 18px;
    margin-top: -8px;
    border: 1px solid #000;
    background: #c0c0c0;
}

/* Panels */
.work {
    flex: 1;
    min-height: 0;
    display: flex;
    gap: 4px;
}

.left {
    flex: 1;
    min-width: 0;
    display: flex;
    flex-direction: column;
    gap: 4px;
}

.viewport {
    flex: 1;
    min-height: 0;
    width: 100%;
    background: linear-gradient(#000, #fff);
}

.axis-label {
    font: 14px "DejaVu Sans", sans-serif;
}

.scale-label {
    fill: #fff;
    font: bold 14px "Liberation Sans", sans-serif;
    text-anchor: middle;
}

.panel-head {
    display: flex;
    align-items: center;
    gap: 8px;
    height: 18px;
    margin: 0;
    padding: 2px 6px 0 2px;
    border: 1px solid #808080;
    border-radius: 2px;
    font-size: 11px;
    font-weight: normal;
}

.panel-head button:first-of-type {
    margin-left: auto;
}

.panel-head svg {
    width: 9px;
    height: 9px;
}

.progress-panel {
    flex: none;
    height: 32px;
    padding-left: 1px;
}

progress {
    display: block;
    appearance: none;
    width: calc(100% - 27px);
    height: 5px;
    margin: 8px 14px 0 13px;
    border: solid #000;
    border-width: 0 1px;
}

progress::-webkit-progress-bar {
    padding: 1px 0;
    background: #c0c0c0;
}

progress::-webkit-progress-value {
    background: #f0c468;
}

.side {
    flex: none;
    width: 367px;
    display: flex;
    flex-direction: column;
    gap: 4px;
    overflow: hidden;
}

.side .panel-head {
    border-right: 0;
}

.report {
    flex: 1;
    min-height: 0;
    background: linear-gradient(#c0c0c0, #c0c0c0) top / 100% 20px no-repeat #fff;
}

.report table {
    width: 100%;
    margin-top: 2px;
    table-layout: fixed;
    border-collapse: collapse;
    font: 10px/14px "Liberation Mono", monospace;
    white-space: nowrap;
}

.indent {
    width: 16px;
}

.block {
    width: 137px;
}

.report th {
    height: 20px;
    padding: 0 4px;
    background: #c0c0c0;
    border-top: 1px solid #fff;
    border-right: 1px solid #000;
    font-weight: normal;
    text-align: left;
}

.report th:first-child {
    padding-left: 20px;
}

.report th:last-child {
    border-right: 0;
}

.report th svg {
    float: right;
    width: 10px;
    height: 5px;
    margin-top: 5px;
}

.report td {
    padding: 0 2px;
}

.group-row,
.subgroup-row {
    height: 23px;
    border-bottom: 2px solid #808080;
    font-size: 12px;
    font-weight: bold;
}

.group-row {
    background: #000080;
    color: #fff;
}

.subgroup-row {
    color: #000060;
}

.subgroup-row td:first-child,
.item-row td:first-child {
    background: #b4b4b4;
}

.fold {
    display: inline-block;
    width: 9px;
    height: 9px;
    margin: 0 5px 0 2px;
    border: 1px solid #000;
    color: #000;
    font-size: 10px;
    line-height: 7px;
    text-align: center;
    vertical-align: -1px;
}

.group-row .fold {
    margin: 0 0 0 2px;
}

.item-row {
    height: 16px;
    border-bottom: 1px solid #c8c8c8;
}

.item-row td:nth-child(2) {
    background: #f6f6f6;
}

.swatch {
    display: inline-block;
    width: 12px;
    height: 11px;
    margin-right: 1px;
    border: 1px solid #000;
    border-radius: 2px;
    background: #fac864;
    vertical-align: -1px;
}

.moves {
    flex: none;
}

.moves-body {
    display: flex;
    margin-top: 2px;
    padding-left: 2px;
    border: solid #b87878;
    border-width: 1px 0 0 1px;
    box-shadow: inset 2px 2px #e4a8a8;
}

.moves table {
    flex: none;
    align-self: flex-start;
    width: 349px;
    margin-top: 2px;
    margin-left: 1px;
    table-layout: fixed;
    border-collapse: collapse;
    font: 12px/17px "Liberation Mono", monospace;
}

.moves th {
    width: 56px;
    height: 20px;
    padding: 0;
    font-weight: normal;
}

.moves th:first-child {
    width: 88px;
    padding-left: 32px;
}

.moves th:last-child {
    width: 37px;
    padding-right: 5px;
    text-align: right;
}

.moves tbody {
    border: solid #000;
    border-width: 1px 0 0 2px;
    border-right: 1px solid #fff;
}

.moves td {
    height: 17px;
    padding: 0 20px 0 0;
    text-align: right;
}

.moves td:last-child {
    padding-right: 8px;
}

.moves .pad td {
    height: 8px;
}

.move-slider {
    flex: 1;
    contain: size;
    margin: 28px 0 12px 4px;
    overflow: hidden;
}

.move-slider input {
    display: block;
    appearance: none;
    writing-mode: vertical-lr;
    width: 18px;
    height: 100%;
    margin: 0;
    background: none;
}

.move-slider input::-webkit-slider-runnable-track {
    width: 3px;
    background: #808080;
}

.move-slider input::-webkit-slider-thumb {
    appearance: none;
    width: 18px;
    height: 9px;
    margin-left: -8px;
    border: 1px solid #000;
    background: #c0c0c0;
}
```
